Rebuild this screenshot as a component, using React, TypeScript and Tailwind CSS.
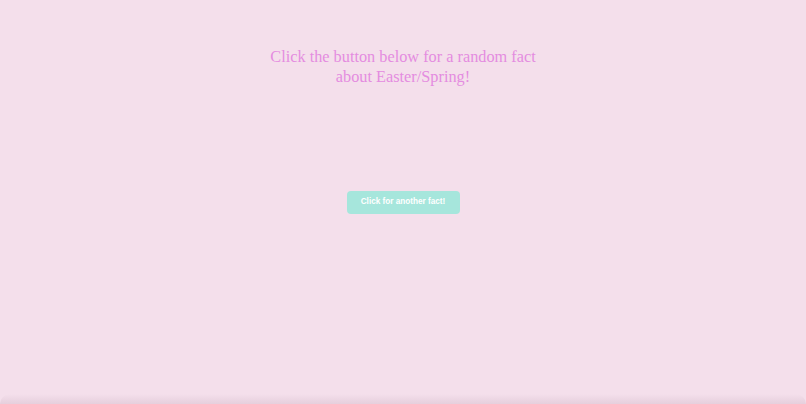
export default function App() {
  return (
    <div className="relative flex h-[404px] w-full flex-col items-center overflow-hidden bg-[#f4dfeb]">
      <h1 className="mt-[47px] w-[300px] text-center font-['Liberation_Serif',serif] text-[16.3px] leading-[20px] text-[#e48ce0]">
        Click the button below for a random fact about Easter/Spring!
      </h1>
      <button className="mt-[104px] h-[23px] w-[113px] rounded-[4px] bg-[#a6e6dc] font-['Liberation_Sans',sans-serif] text-[8.2px] font-bold text-white">
        Click for another fact!
      </button>
      <div className="absolute bottom-0 left-0 right-0 h-[10px] rounded-t-[30px] bg-gradient-to-b from-transparent to-[#e6cfdc]" />
    </div>
  )
}
